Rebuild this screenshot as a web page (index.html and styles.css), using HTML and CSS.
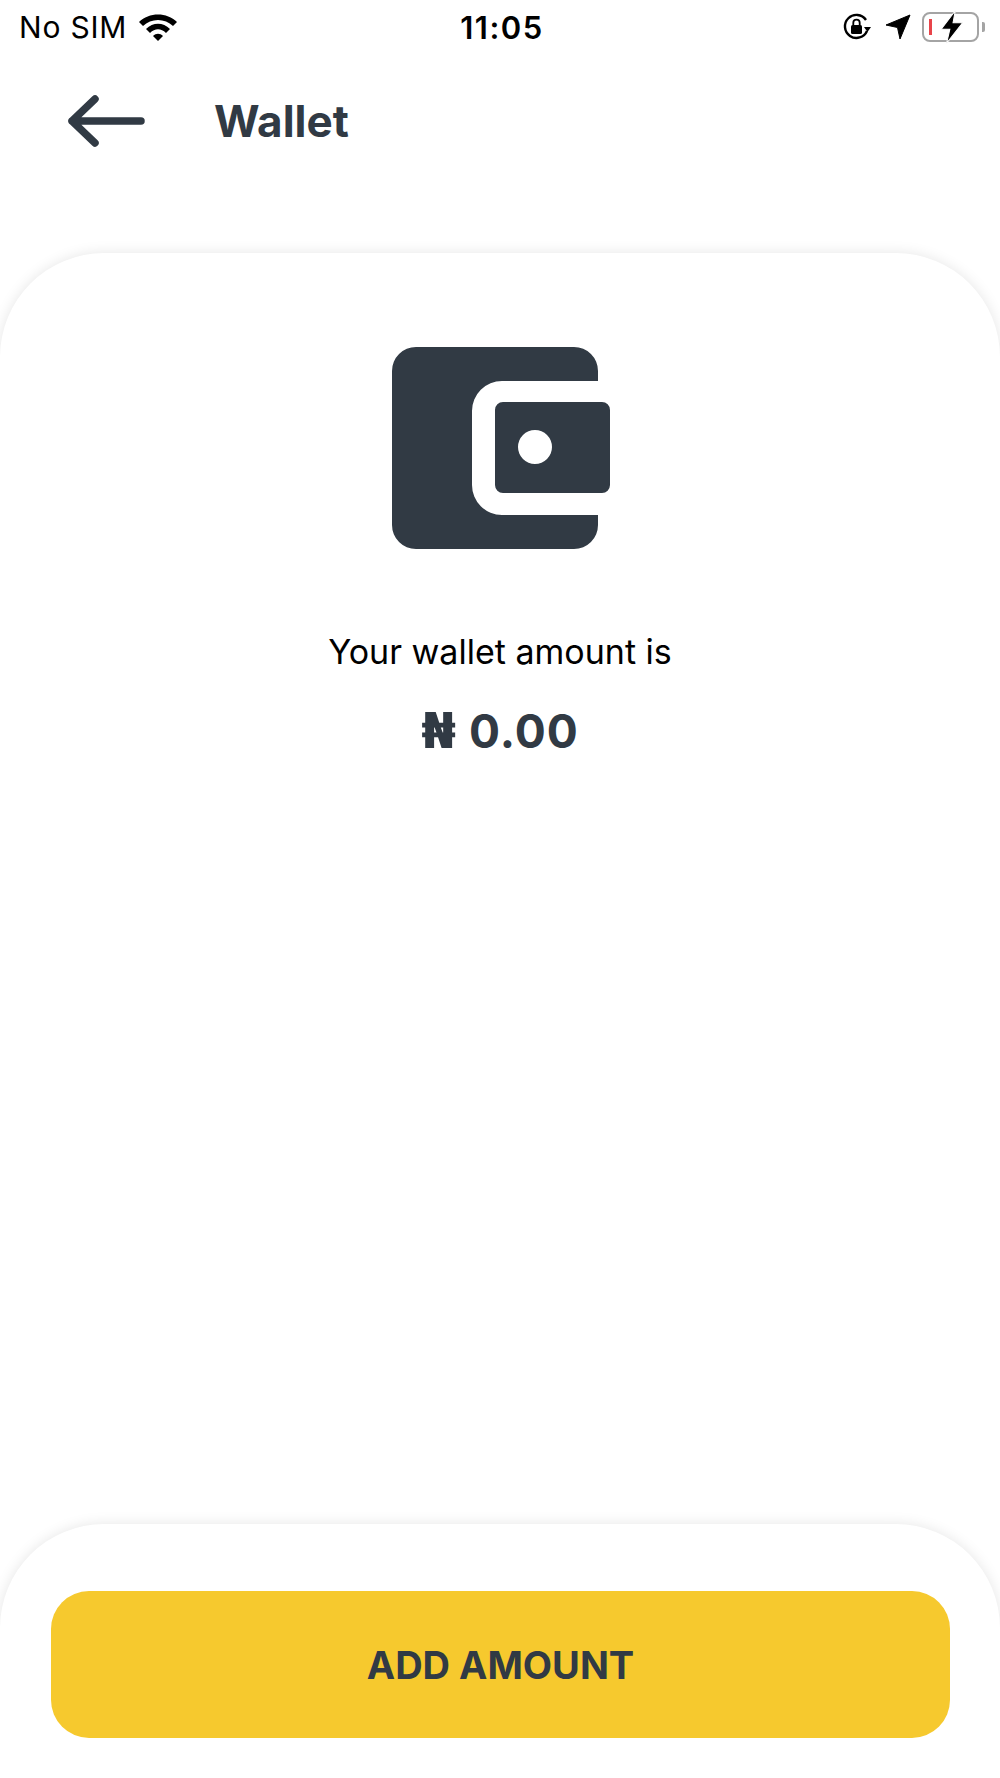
FILE: index.html
```html
<!DOCTYPE html>
<html lang="en">

<head>
    <meta charset="UTF-8">
    <meta name="viewport" content="width=device-width, initial-scale=1.0">
    <title>Wallet</title>
    <link rel="stylesheet" href="styles.css">
</head>

<body>
    <div class="screen">
        <div class="status-bar">
            <div class="status-left">
                <span>No SIM</span>
                <svg class="wifi" width="40" height="30" viewBox="0 0 40 30">
                    <path d="M1 10 C11 0 29 0 39 10 L35 14 C27 6 13 6 5 14 Z" />
                    <path d="M8 17 C15 10 25 10 32 17 L28 21 C23 16 17 16 12 21 Z" />
                    <path d="M15 24 C18 21 22 21 25 24 L20 29 Z" />
                </svg>
            </div>
            <div class="status-time">11:05</div>
            <div class="status-right">
                <svg width="30" height="30" viewBox="0 0 30 30">
                    <path d="M25 19 A11.5 11.5 0 1 1 24 8" fill="none" stroke="#000" stroke-width="2.4" />
                    <path d="M22 15 L29 15 L25.5 20 Z" />
                    <rect x="9" y="13" width="11" height="9" rx="1.5" />
                    <path d="M11.3 13 V10.8 A3.2 3.2 0 0 1 17.7 10.8 V13" fill="none" stroke="#000" stroke-width="1.8" />
                </svg>
                <svg width="26" height="26" viewBox="0 0 26 26">
                    <path d="M25 1 L15 25 L12.5 13.5 L1 11 Z" stroke="#000" stroke-width="1" stroke-linejoin="round" />
                </svg>
                <div class="battery">
                    <span class="battery-level"></span>
                    <svg class="bolt" width="26" height="36" viewBox="0 0 24 32">
                        <path d="M15 1 L2 18 L10 18 L7 31 L22 12 L13 12 Z" stroke="#fff" stroke-width="1" />
                    </svg>
                </div>
                <span class="battery-cap"></span>
            </div>
        </div>

        <div class="top-bar">
            <svg class="back" width="80" height="56" viewBox="0 0 80 56">
                <path d="M28 6 L5 28 L28 50 M5 28 L74 28" fill="none" stroke="#313a44" stroke-width="7.5" stroke-linecap="round" stroke-linejoin="round" />
            </svg>
            <h1 class="title">Wallet</h1>
        </div>

        <div class="card">
            <svg class="wallet-icon" width="218" height="202" viewBox="0 0 218 202">
                <path d="M24 0 H182 A24 24 0 0 1 206 24 V34 H110 A30 30 0 0 0 80 64 V138 A30 30 0 0 0 110 168 H206 V178 A24 24 0 0 1 182 202 H24 A24 24 0 0 1 0 178 V24 A24 24 0 0 1 24 0 Z" />
                <path fill-rule="evenodd" d="M111 55 H210 A8 8 0 0 1 218 63 V138 A8 8 0 0 1 210 146 H111 A8 8 0 0 1 103 138 V63 A8 8 0 0 1 111 55 Z M160 100 A17 17 0 1 0 126 100 A17 17 0 1 0 160 100 Z" />
            </svg>
            <p class="wallet-label">Your wallet amount is</p>
            <p class="wallet-amount"><span class="naira">₦</span> 0.00</p>
        </div>

        <div class="footer">
            <button class="add-button">ADD AMOUNT</button>
        </div>
    </div>
</body>

</html>
```

FILE: styles.css
```css
* {
    box-sizing: border-box;
}

body {
    margin: 0;
    background-color: #fff;
    font-family: Inter, "Liberation Sans", sans-serif;
}

.screen {
    display: flex;
    flex-direction: column;
    height: 1778px;
    overflow: hidden;
}

.status-bar {
    display: grid;
    grid-template-columns: 1fr auto 1fr;
    align-items: center;
    height: 54px;
    padding: 0 15px 0 19px;
    color: #000;
    font-size: 30px;
    letter-spacing: 0.8px;
}

.status-left {
    display: flex;
    align-items: center;
    gap: 11px;
}

.status-time {
    font-weight: 600;
    font-size: 31px;
    letter-spacing: 1.5px;
}

.status-right {
    display: flex;
    align-items: center;
    justify-content: flex-end;
    gap: 13px;
}

.battery {
    position: relative;
    width: 57px;
    height: 30px;
    margin-left: -2px;
    margin-right: -10px;
    border: 2px solid #a4a4a4;
    border-radius: 8px;
}

.battery-level {
    position: absolute;
    left: 5px;
    top: 5px;
    width: 3px;
    height: 16px;
    background-color: #e8444a;
}

.bolt {
    position: absolute;
    left: 15px;
    top: -5px;
}

.battery-cap {
    width: 3px;
    height: 10px;
    background-color: #a4a4a4;
    border-radius: 0 2px 2px 0;
}

.top-bar {
    display: flex;
    align-items: center;
    gap: 50px;
    height: 134px;
    padding: 0 0 0 67px;
}

.back {
    flex: none;
}

.title {
    margin: 0 0 0 17px;
    color: #313a44;
    font-size: 44px;
    font-weight: 700;
}

/* the card runs on under the footer so its lower edge stays hidden */
.card {
    flex: 1;
    display: flex;
    flex-direction: column;
    align-items: center;
    margin-top: 65px;
    margin-bottom: -120px;
    padding-top: 94px;
    border-radius: 104px 104px 0 0;
    background-color: #fff;
    box-shadow: 0 0 14px rgba(0, 0, 0, 0.1);
}

.wallet-icon {
    margin-left: 2px;
    fill: #313a44;
}

.wallet-label {
    margin: 81px 0 0;
    color: #000;
    font-size: 34px;
    line-height: 44px;
}

.wallet-amount {
    margin: 32px 0 0;
    color: #313a44;
    font-size: 46px;
    line-height: 50px;
    font-weight: 700;
    letter-spacing: 1px;
}

.naira {
    font-family: "DejaVu Sans", sans-serif;
    font-size: 50px;
    line-height: 1;
}

.footer {
    position: relative;
    height: 254px;
    padding: 67px 50px 0 51px;
    border-radius: 104px 104px 0 0;
    background-color: #fff;
    box-shadow: 0 0 14px rgba(0, 0, 0, 0.1);
}

.add-button {
    display: block;
    width: 100%;
    height: 147px;
    border: none;
    border-radius: 38px;
    background-color: #f6c92e;
    color: #313a44;
    font-family: inherit;
    font-size: 38px;
    font-weight: 700;
}
```
